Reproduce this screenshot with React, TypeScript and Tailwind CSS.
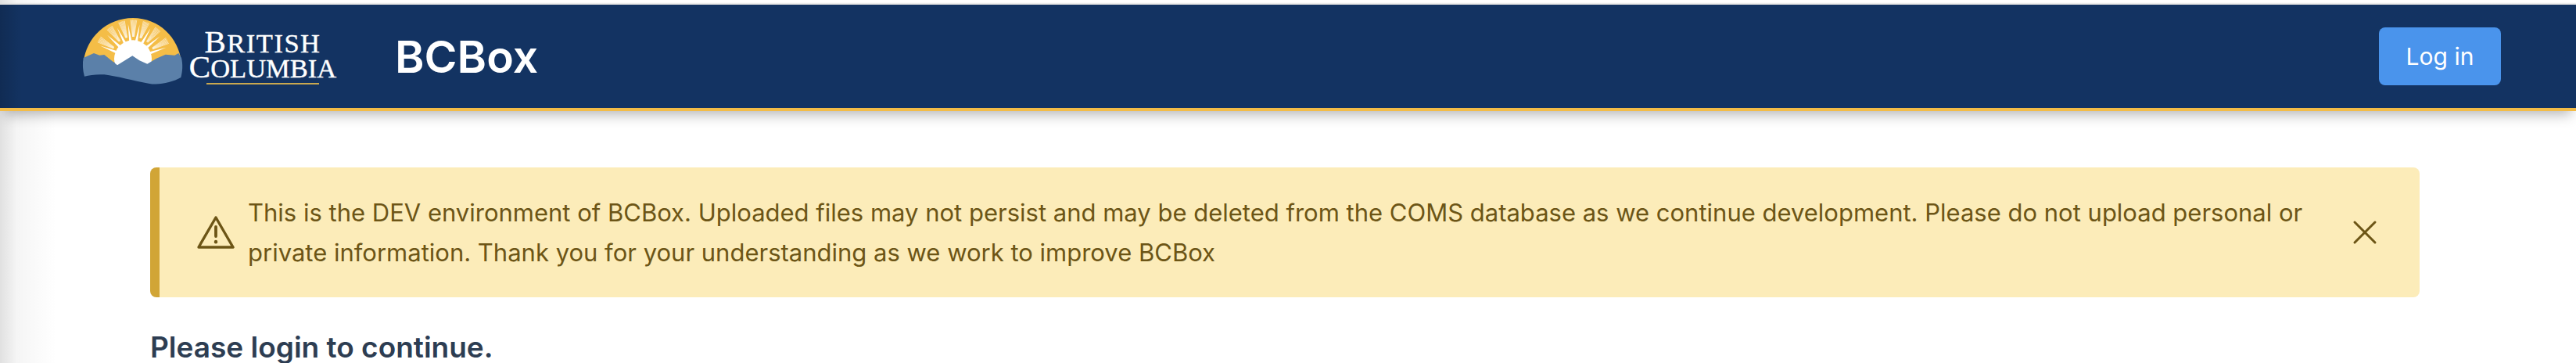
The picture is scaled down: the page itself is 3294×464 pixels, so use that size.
import { X } from 'lucide-react'

const solidRays = [-68, -47, -27, -8, 11, 30, 50, 71]
const fanRays = [-60, -37, -17, 1, 20, 40, 62]

const toXY = (deg: number, r: number) => {
  const a = (deg * Math.PI) / 180
  return [210 + r * Math.sin(a), 172 - r * Math.cos(a)]
}

// BC sun and mountains, drawn on a 420x285 grid
function BcMark() {
  return (
    <svg viewBox="0 0 420 285" className="w-[140px] h-[95px] shrink-0">
      <path d="M20 185 C30 90 110 15 210 15 C310 15 385 90 396 185 Z" fill="#f4bd47" />
      {solidRays.map(deg => {
        const [x1, y1] = toXY(deg - 4, 70)
        const [x2, y2] = toXY(deg + 4, 70)
        const [tx, ty] = toXY(deg, 135)
        return <polygon key={deg} points={`${x1},${y1} ${x2},${y2} ${tx},${ty}`} fill="#fff" />
      })}
      {fanRays.map(deg =>
        [-4.5, -3, -1.5, 0, 1.5, 3, 4.5].map(off => {
          const [x1, y1] = toXY(deg + off * 0.45, 85)
          const [x2, y2] = toXY(deg + off, 150)
          return <line key={deg + off / 10} x1={x1} y1={y1} x2={x2} y2={y2} stroke="#fff" strokeOpacity="0.85" strokeWidth="2" />
        })
      )}
      <circle cx="210" cy="172" r="72" fill="#fff" />
      <path
        d="M20 168 L60 150 L82 158 L100 156 L150 196 L208 160 L235 178 L265 191 L300 170 L335 155 L370 158 L385 150 L396 168 C402 195 400 220 394 243 C360 262 310 274 270 266 C210 256 150 238 100 232 C70 230 45 234 24 239 C17 215 16 190 20 168 Z"
        fill="#5b80a9"
      />
    </svg>
  )
}

function WarningIcon() {
  return (
    <svg viewBox="0 0 48 42" className="w-[48px] h-[42px] shrink-0" fill="none" stroke="#6c5516" strokeLinecap="round" strokeLinejoin="round">
      <path d="M24 2 L46 40 L2 40 Z" strokeWidth="3.4" />
      <path d="M24 14 L24 26" strokeWidth="3.8" />
      <path d="M24 33 L24 33.2" strokeWidth="4.4" />
    </svg>
  )
}

export default function App() {
  return (
    <div className="relative h-[464px] overflow-hidden bg-white font-['Inter',sans-serif]">
      {/* Soft shadow along the left edge */}
      <div className="pointer-events-none absolute inset-y-0 left-0 w-[72px] bg-gradient-to-r from-black/12 via-black/4 via-30% to-transparent" />

      <div className="relative h-[6px] bg-gradient-to-b from-transparent from-50% to-[#dcdcdc]" />

      {/* Header */}
      <header className="relative z-10 flex h-[136px] items-center border-b-4 border-[#f3bc47] bg-[#133362] pl-[100px] pr-[96px] shadow-[0_10px_16px_-6px_rgba(0,0,0,0.3)]">
        <div className="pointer-events-none absolute inset-y-0 left-0 w-[28px] bg-gradient-to-r from-black/15 to-transparent" />
        <div className="-mt-[13px]">
          <BcMark />
        </div>
        <div className="ml-[1px] flex w-[190px] flex-col items-center font-['Liberation_Serif',serif] text-white [-webkit-text-stroke:0.4px_white]">
          <div className="h-[32px] text-[34.5px] leading-[32px] tracking-[1.5px]">
            <span className="text-[41px]">B</span>RITISH
          </div>
          <div className="h-[32px] text-[34.5px] leading-[32px] tracking-normal">
            <span className="text-[41px]">C</span>OLUMBIA
          </div>
          <div className="mt-[5px] h-[2px] w-[144px] bg-[#c9a84f]" />
        </div>
        <span className="ml-[74px] text-[57px] font-semibold leading-none text-white">BCBox</span>
        <button className="ml-auto h-[74px] w-[156px] rounded-lg bg-[#4a94ec] text-[30px] text-white">Log in</button>
      </header>

      {/* Body */}
      <main className="relative pl-[192px] pr-[200px] pt-[72px]">
        <div className="flex h-[166px] items-center rounded-lg border-l-[12px] border-[#d1a536] bg-[#fcecb9] text-[#6c5516]">
          <div className="ml-[48px]">
            <WarningIcon />
          </div>
          <p className="ml-[17px] min-w-0 flex-1 text-[31px] leading-[51px]">
            This is the DEV environment of BCBox. Uploaded files may not persist and may be deleted from the COMS database as we continue development. Please do not upload personal or private information. Thank you for your understanding as we work to improve BCBox
          </p>
          <X className="mr-[44px] size-[52px] shrink-0" strokeWidth={1.4} />
        </div>
        <h1 className="mt-[45px] text-[37px] font-semibold leading-none text-[#2d3d52]">Please login to continue.</h1>
      </main>
    </div>
  )
}
